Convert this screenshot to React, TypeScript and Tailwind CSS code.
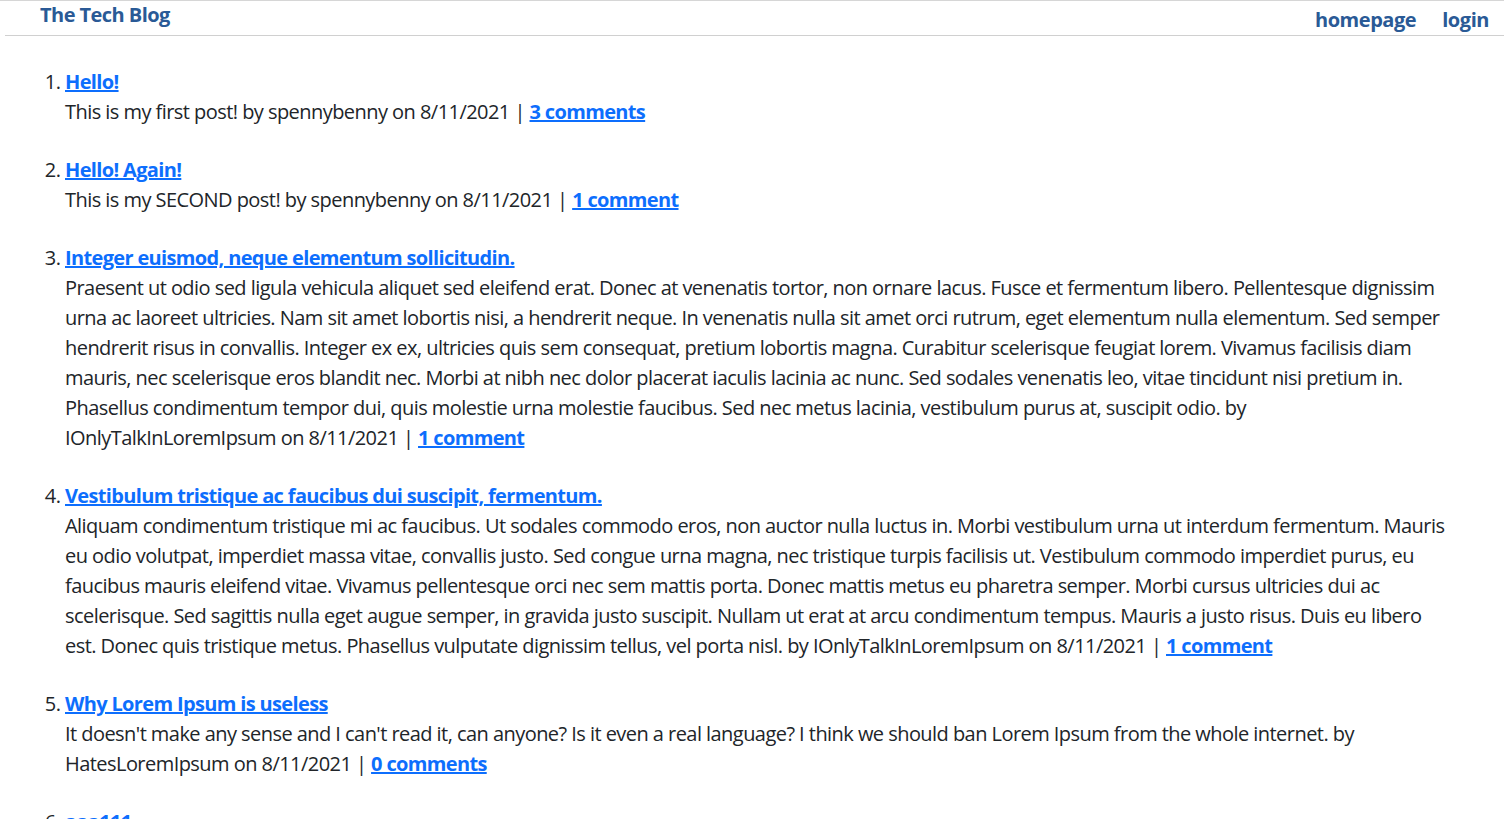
import React from "react";

const posts = [
  {
    title: "Hello!",
    body: "This is my first post!",
    author: "spennybenny",
    date: "8/11/2021",
    comments: "3 comments",
  },
  {
    title: "Hello! Again!",
    body: "This is my SECOND post!",
    author: "spennybenny",
    date: "8/11/2021",
    comments: "1 comment",
  },
  {
    title: "Integer euismod, neque elementum sollicitudin.",
    body: "Praesent ut odio sed ligula vehicula aliquet sed eleifend erat. Donec at venenatis tortor, non ornare lacus. Fusce et fermentum libero. Pellentesque dignissim urna ac laoreet ultricies. Nam sit amet lobortis nisi, a hendrerit neque. In venenatis nulla sit amet orci rutrum, eget elementum nulla elementum. Sed semper hendrerit risus in convallis. Integer ex ex, ultricies quis sem consequat, pretium lobortis magna. Curabitur scelerisque feugiat lorem. Vivamus facilisis diam mauris, nec scelerisque eros blandit nec. Morbi at nibh nec dolor placerat iaculis lacinia ac nunc. Sed sodales venenatis leo, vitae tincidunt nisi pretium in. Phasellus condimentum tempor dui, quis molestie urna molestie faucibus. Sed nec metus lacinia, vestibulum purus at, suscipit odio.",
    author: "IOnlyTalkInLoremIpsum",
    date: "8/11/2021",
    comments: "1 comment",
  },
  {
    title: "Vestibulum tristique ac faucibus dui suscipit, fermentum.",
    body: "Aliquam condimentum tristique mi ac faucibus. Ut sodales commodo eros, non auctor nulla luctus in. Morbi vestibulum urna ut interdum fermentum. Mauris eu odio volutpat, imperdiet massa vitae, convallis justo. Sed congue urna magna, nec tristique turpis facilisis ut. Vestibulum commodo imperdiet purus, eu faucibus mauris eleifend vitae. Vivamus pellentesque orci nec sem mattis porta. Donec mattis metus eu pharetra semper. Morbi cursus ultricies dui ac scelerisque. Sed sagittis nulla eget augue semper, in gravida justo suscipit. Nullam ut erat at arcu condimentum tempus. Mauris a justo risus. Duis eu libero est. Donec quis tristique metus. Phasellus vulputate dignissim tellus, vel porta nisl.",
    author: "IOnlyTalkInLoremIpsum",
    date: "8/11/2021",
    comments: "1 comment",
  },
  {
    title: "Why Lorem Ipsum is useless",
    body: "It doesn't make any sense and I can't read it, can anyone? Is it even a real language? I think we should ban Lorem Ipsum from the whole internet.",
    author: "HatesLoremIpsum",
    date: "8/11/2021",
    comments: "0 comments",
  },
  {
    title: "aaa111",
    body: "aaa",
    author: "spennybenny",
    date: "8/11/2021",
    comments: "0 comments",
  },
];

export default function App() {
  return (
    <div
      className="min-h-screen bg-white text-[#212529]"
      style={{ fontFamily: '"Open Sans", "Noto Sans", sans-serif' }}
    >
      <div className="border-t border-[#d6d6d6]">
        <header className="ml-[5px] flex h-[35px] items-start justify-between border-b border-[#d0d0d0]">
          <a className="ml-[35px] mt-[1px] text-[20px] font-bold leading-[26px] text-[#2a5a96] tracking-[-0.55px]">
            The Tech Blog
          </a>
          <nav className="mr-[15px] mt-[6px] flex gap-[26px] text-[20px] font-bold leading-[26px] text-[#2a5a96] tracking-[-0.45px]">
            <a>homepage</a>
            <a>login</a>
          </nav>
        </header>
      </div>
      <ol className="list-decimal pl-[65px] pr-[54px] pt-[31px] text-[20px] leading-[30px] tracking-[-0.55px]">
        {posts.map((p, i) => (
          <li key={i} className="mb-[28px]">
            <a className="font-bold text-[#0d6efd] underline tracking-[-0.65px]" href="#">
              {p.title}
            </a>
            <p>
              {p.body} by {p.author} on {p.date} |{" "}
              <a className="font-bold text-[#0d6efd] underline tracking-[-0.65px]" href="#">
                {p.comments}
              </a>
            </p>
          </li>
        ))}
      </ol>
    </div>
  );
}
